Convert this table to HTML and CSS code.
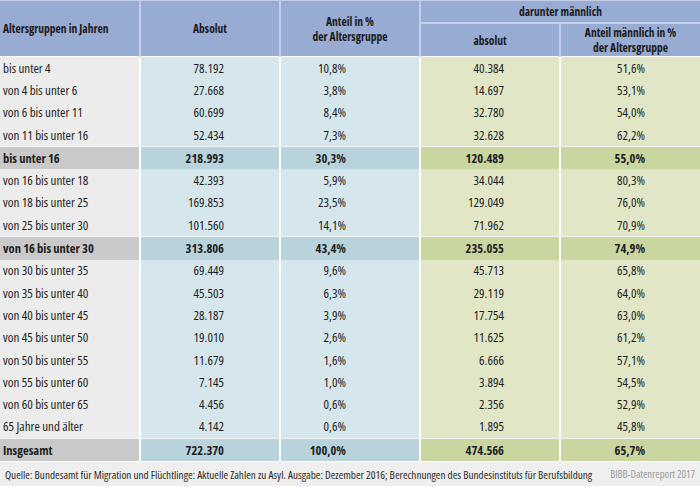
FILE: index.html
```html
<!DOCTYPE html>
<html lang="de">
<head>
<meta charset="utf-8">
<title>Altersgruppen</title>
<link rel="stylesheet" href="styles.css">
</head>
<body>
<div class="page">
<table class="data">
  <colgroup>
    <col class="c1"><col class="c2"><col class="c3"><col class="c4"><col class="c5">
  </colgroup>
  <thead>
    <tr class="h1">
      <th rowspan="2" class="lab">Altersgruppen in Jahren</th>
      <th rowspan="2">Absolut</th>
      <th rowspan="2">Anteil in %<br>der Altersgruppe</th>
      <th colspan="2" class="group">darunter männlich</th>
    </tr>
    <tr class="h2">
      <th>absolut</th>
      <th>Anteil männlich in %<br>der Altersgruppe</th>
    </tr>
  </thead>
  <tbody>
    <tr><td class="lab">bis unter 4</td><td class="b n2">78.192</td><td class="b n3">10,8%</td><td class="g n4">40.384</td><td class="g n5">51,6%</td></tr>
    <tr><td class="lab">von 4 bis unter 6</td><td class="b n2">27.668</td><td class="b n3">3,8%</td><td class="g n4">14.697</td><td class="g n5">53,1%</td></tr>
    <tr><td class="lab">von 6 bis unter 11</td><td class="b n2">60.699</td><td class="b n3">8,4%</td><td class="g n4">32.780</td><td class="g n5">54,0%</td></tr>
    <tr><td class="lab">von 11 bis unter 16</td><td class="b n2">52.434</td><td class="b n3">7,3%</td><td class="g n4">32.628</td><td class="g n5">62,2%</td></tr>
    <tr class="sum"><td class="lab">bis unter 16</td><td class="b n2">218.993</td><td class="b n3">30,3%</td><td class="g n4">120.489</td><td class="g n5">55,0%</td></tr>
    <tr><td class="lab">von 16 bis unter 18</td><td class="b n2">42.393</td><td class="b n3">5,9%</td><td class="g n4">34.044</td><td class="g n5">80,3%</td></tr>
    <tr><td class="lab">von 18 bis unter 25</td><td class="b n2">169.853</td><td class="b n3">23,5%</td><td class="g n4">129.049</td><td class="g n5">76,0%</td></tr>
    <tr><td class="lab">von 25 bis unter 30</td><td class="b n2">101.560</td><td class="b n3">14,1%</td><td class="g n4">71.962</td><td class="g n5">70,9%</td></tr>
    <tr class="sum"><td class="lab">von 16 bis unter 30</td><td class="b n2">313.806</td><td class="b n3">43,4%</td><td class="g n4">235.055</td><td class="g n5">74,9%</td></tr>
    <tr><td class="lab">von 30 bis unter 35</td><td class="b n2">69.449</td><td class="b n3">9,6%</td><td class="g n4">45.713</td><td class="g n5">65,8%</td></tr>
    <tr><td class="lab">von 35 bis unter 40</td><td class="b n2">45.503</td><td class="b n3">6,3%</td><td class="g n4">29.119</td><td class="g n5">64,0%</td></tr>
    <tr><td class="lab">von 40 bis unter 45</td><td class="b n2">28.187</td><td class="b n3">3,9%</td><td class="g n4">17.754</td><td class="g n5">63,0%</td></tr>
    <tr><td class="lab">von 45 bis unter 50</td><td class="b n2">19.010</td><td class="b n3">2,6%</td><td class="g n4">11.625</td><td class="g n5">61,2%</td></tr>
    <tr><td class="lab">von 50 bis unter 55</td><td class="b n2">11.679</td><td class="b n3">1,6%</td><td class="g n4">6.666</td><td class="g n5">57,1%</td></tr>
    <tr><td class="lab">von 55 bis unter 60</td><td class="b n2">7.145</td><td class="b n3">1,0%</td><td class="g n4">3.894</td><td class="g n5">54,5%</td></tr>
    <tr><td class="lab">von 60 bis unter 65</td><td class="b n2">4.456</td><td class="b n3">0,6%</td><td class="g n4">2.356</td><td class="g n5">52,9%</td></tr>
    <tr><td class="lab">65 Jahre und älter</td><td class="b n2">4.142</td><td class="b n3">0,6%</td><td class="g n4">1.895</td><td class="g n5">45,8%</td></tr>
    <tr class="sum"><td class="lab">Insgesamt</td><td class="b n2">722.370</td><td class="b n3">100,0%</td><td class="g n4">474.566</td><td class="g n5">65,7%</td></tr>
  </tbody>
</table>
<div class="footer">
  <span class="src">Quelle: Bundesamt für Migration und Flüchtlinge: Aktuelle Zahlen zu Asyl. Ausgabe: Dezember 2016; Berechnungen des Bundesinstituts für Berufsbildung</span>
  <span class="brand">BIBB-Datenreport 2017</span>
</div>
</div>
</body>
</html>
```

FILE: styles.css
```css
html, body {
  margin: 0;
  padding: 0;
  background: #ffffff;
}

.page {
  width: 700px;
  font-family: "Open Sans", sans-serif;
  font-stretch: 75%;
  color: #1e1e1e;
}

.data {
  width: 700px;
  border-collapse: collapse;
  table-layout: fixed;
  font-size: 13px;
}

.c1, .c2, .c3, .c4, .c5 { width: 140px; }

.data th {
  background: #98abd3;
  font-weight: bold;
  font-size: 11.5px;
  line-height: 15px;
  text-align: center;
  vertical-align: middle;
  padding: 0;
  border-left: 2px solid #c3cfe8;
  border-top: 1px solid #c3cfe8;
  color: #1a1a1a;
}

.data th:first-child { border-left: none; }
.data .h2 th:first-child { border-left: 2px solid #c3cfe8; }

.data .h1 th { height: 21px; }
.data .h1 th.group { border-bottom: 2px solid #c3cfe8; }
.data .h2 th { height: 32px; }

.data th.lab {
  text-align: left;
  padding-left: 3px;
}

.data td {
  height: 22.3px;
  padding: 0;
  line-height: 15px;
  vertical-align: middle;
  text-align: right;
  border-left: 2px solid #ffffff;
  white-space: nowrap;
}

.data td.lab {
  text-align: left;
  padding-left: 3px;
  background: #ececec;
  border-left: none;
}

.data td.b { background: #d5e7ed; }
.data td.g { background: #e1e7c6; }

.n2 { padding-right: 55px !important; }
.n3 { padding-right: 73px !important; }
.n4 { padding-right: 55px !important; }
.n5 { padding-right: 55px !important; }

.data tr.sum td {
  font-weight: bold;
  font-size: 12.5px;
  border-top: 1px solid #f4f4f4;
}
.data tr.sum td.lab { background: #c9c9c9; }
.data tr.sum td.b { background: #b9d3dd; }
.data tr.sum td.g { background: #cad69f; }

.data tbody tr:first-child td { border-top: 1px solid #ffffff; }

.footer {
  display: flex;
  justify-content: space-between;
  align-items: center;
  height: 24px;
  margin-top: 1px;
  padding: 0 5px 0 5px;
  background: #efefef;
  font-size: 11.2px;
  color: #2a2a2a;
  white-space: nowrap;
}

.footer .brand {
  font-size: 10.6px;
  color: #9a9a9a;
}
```
